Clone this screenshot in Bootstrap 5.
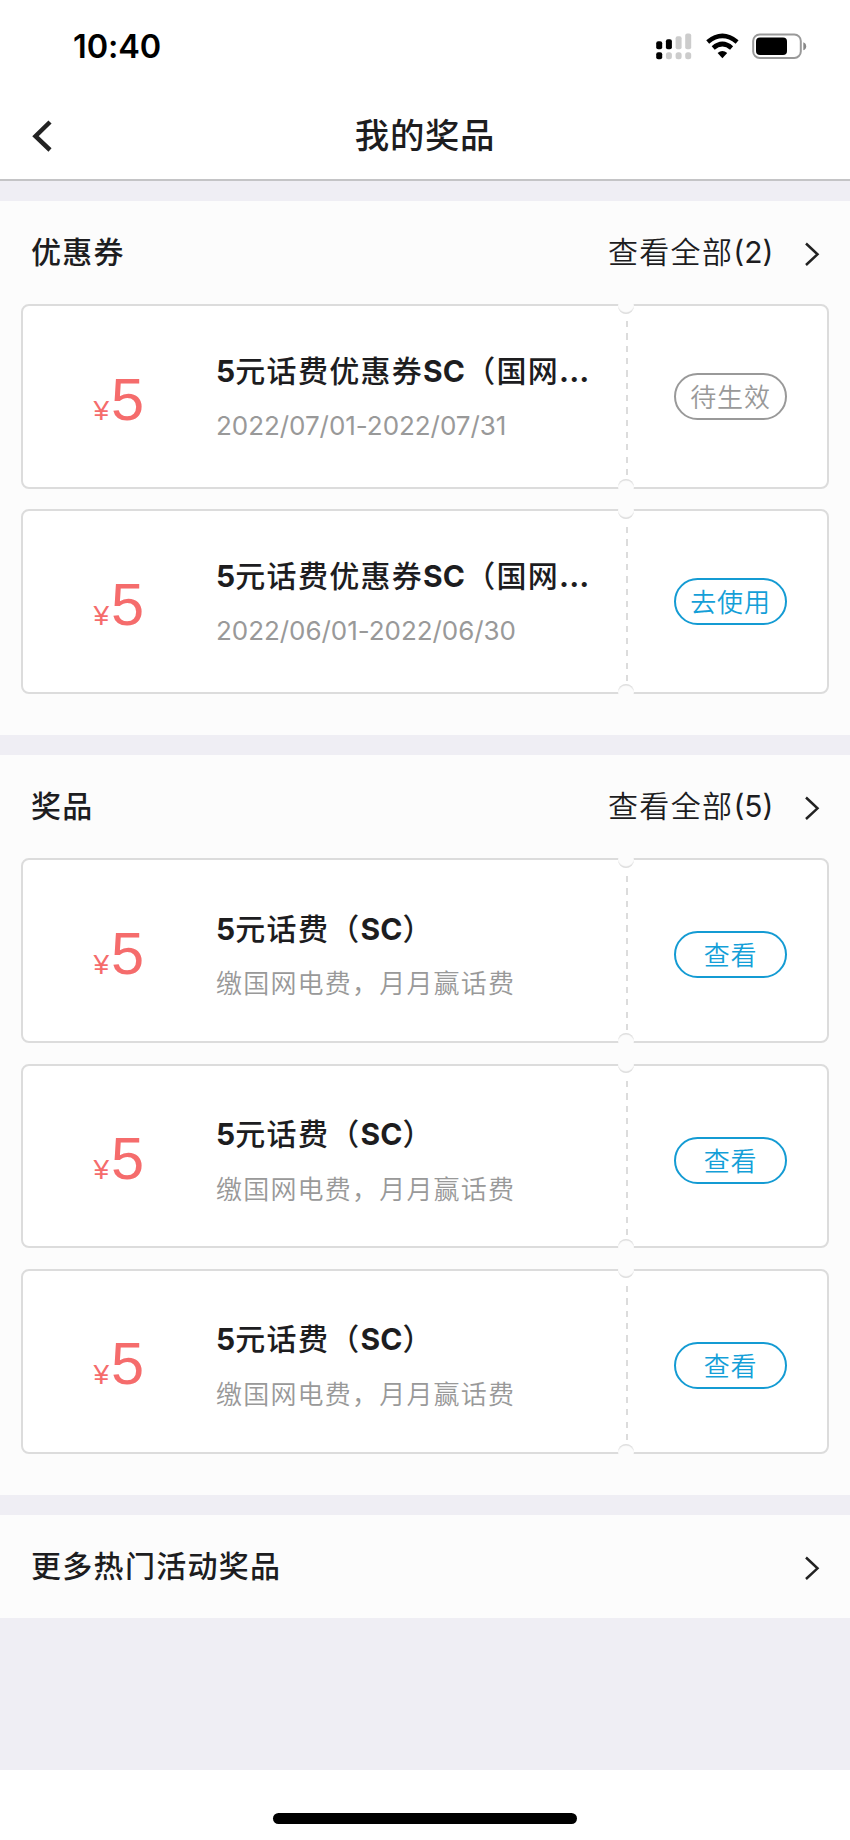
<!DOCTYPE html>
<html lang="zh-CN">
<head>
<meta charset="utf-8">
<meta name="viewport" content="width=device-width, initial-scale=1">
<title>我的奖品</title>
<link href="https://cdn.jsdelivr.net/npm/bootstrap@5.3.0/dist/css/bootstrap.min.css" rel="stylesheet">
<style>
  body { font-family: Inter, "Noto Sans CJK SC", sans-serif; color: #1d1d1f; background: #fff; height: 1840px; overflow: hidden; }
  .status-bar { height: 94px; padding: 0 43px 0 73px; color: #000; }
  .status-time { font-size: 32.5px; font-weight: 600; line-height: 94px; letter-spacing: -.1px; }
  .title-bar { height: 86.5px; border-bottom: 2px solid #c4c4c6; display: grid; grid-template-columns: 90px 1fr 90px; align-items: center; }
  .title-bar h1 { font-size: 34.4px; font-weight: 500; letter-spacing: .7px; line-height: 84px; }
  .page-area { background: #efeef4; padding-top: 20.5px; height: 1589.5px; gap: 20.5px; }
  .panel { background: #fcfcfc; }
  .panel-head { height: 103px; padding: 0 30px 0 31px; }
  .panel-head h2 { font-size: 30px; font-weight: 500; letter-spacing: 1.3px; line-height: 103px; }
  .view-all { font-size: 30px; letter-spacing: 1.35px; font-weight: 350; margin-right: 30.500px; }
  .view-all span { letter-spacing: 0; font-weight: 400; }
  .tickets { padding: 0 21px 41px; gap: 20.7px; }
  .ticket { height: 184.6px; border: 2px solid #dcdcdc; border-radius: 8px; background: #fff; position: relative; }
  .price { width: 193px; color: #f56c6c; padding: 58.5px 0 0 70.5px; line-height: 70px; white-space: nowrap; font-family: "Liberation Sans", sans-serif; }
  .price small { font-size: 28px; }
  .price b { font-size: 59.5px; font-weight: 400; margin-left: 2px; }
  .info { width: 376px; padding-top: 42.5px; }
  .info h3 { font-size: 30px; font-weight: 500; letter-spacing: 1.3px; line-height: 44px; white-space: nowrap; }
  .info h3 i { font-style: normal; font-weight: 650; letter-spacing: .1px; font-size: 30px; }
  .info p { font-size: 26px; line-height: 34px; color: #999; margin-top: 16.5px; font-weight: 400; letter-spacing: -.05px; }
  .info .note { letter-spacing: 1.2px; font-weight: 350; margin-top: 16.5px; }
  .prize .info { padding-top: 46.5px; }
  .tear { width: 34px; }
  .tear::before { content: ""; position: absolute; left: 603px; top: 15.3px; bottom: 11px; width: 2px; background: repeating-linear-gradient(#dcdcdc 0 6.2px, transparent 6.2px 12.33px); }
  .notch { position: absolute; left: 595px; width: 16px; height: 16px; border-radius: 50%; background: #fcfcfc; z-index: 1; }
  .notch-top { top: -8.5px; box-shadow: inset 0 -2px 1px -.5px #ddd; }
  .notch-end { bottom: -8.5px; box-shadow: inset 0 2px 1px -.5px #ddd; }
  .pill { width: 113px; height: 47px; margin: 67px 0 0 48px; padding: 0; border: 2px solid #149bd3; border-radius: 24px; color: #149fd8; font-size: 26px; font-weight: 350; line-height: 45px; letter-spacing: .8px; }
  .pill.waiting { border-color: #999; color: #999; }
  .prize .pill { margin-top: 71px; }
  .home-strip { height: 70px; padding-top: 43px; }
  .home-bar { width: 304px; height: 11px; border-radius: 6px; background: #000; }
</style>
</head>
<body>
<header>
  <div class="status-bar d-flex justify-content-between align-items-center">
    <span class="status-time">10:40</span>
    <svg width="152" height="28" viewBox="0 0 152 28">
      <g>
        <rect x="1.2" y="8.3" width="6" height="8" rx="2"/><rect x="10.9" y="6.3" width="6" height="10" rx="2"/>
        <rect x="1.2" y="19.2" width="6" height="7" rx="2"/>
      </g>
      <g fill="#ccc">
        <rect x="20.6" y="3.3" width="6" height="13" rx="2"/><rect x="30.2" y="0.5" width="6" height="15.8" rx="2"/>
        <rect x="10.9" y="19.2" width="6" height="7" rx="2.5"/><rect x="20.6" y="19.2" width="6" height="7" rx="2.5"/><rect x="30.2" y="19.2" width="6" height="7" rx="2.5"/>
      </g>
      <g fill="none" stroke="#000" stroke-width="4.6">
        <path d="M52.700 9 Q67.400 -3.200 82.100 9"/>
        <path d="M58.200 15 Q67.400 7 76.600 15"/>
      </g>
      <path d="M62.600 20 Q67.400 16 72.200 20 L67.400 25.300Z"/>
      <rect x="98.2" y="1.5" width="47.6" height="23.4" rx="6.5" fill="#fff" stroke="#999" stroke-width="2"/>
      <rect x="101" y="4.4" width="31" height="17.6" rx="4"/>
      <path d="M148.300 9.200 Q151.200 10.200 151.200 13.200 Q151.200 16.200 148.300 17.200Z" fill="#888"/>
    </svg>
  </div>
  <div class="title-bar">
    <svg width="90" height="84" viewBox="0 0 90 84" fill="none" stroke="#222" stroke-width="4.5"><path d="M50 28 L35.500 42.200 L50 56"/></svg>
    <h1 class="text-center mb-0">我的奖品</h1>
  </div>
</header>
<main class="page-area d-flex flex-column">
  <section class="panel">
    <div class="panel-head d-flex align-items-center">
      <h2 class="mb-0 me-auto">优惠券</h2>
      <span class="view-all">查看全部<span>(2)</span></span>
      <svg width="16" height="26" viewBox="0 0 16 26" fill="none" stroke="#222" stroke-width="2.5"><path d="M2 3.500 L13.500 14.300 L2 25"/></svg>
    </div>
    <div class="tickets d-flex flex-column">
      <article class="ticket d-flex align-items-start">
        <div class="price"><small>¥</small><b>5</b></div>
        <div class="info"><h3 class="mb-0"><i>5</i>元话费优惠券<i>SC</i>（国网<i>...</i></h3><p class="mb-0">2022/07/01-2022/07/31</p></div>
        <div class="tear"><span class="notch notch-top"></span><span class="notch notch-end"></span></div>
        <button class="btn pill waiting">待生效</button>
      </article>
      <article class="ticket d-flex align-items-start">
        <div class="price"><small>¥</small><b>5</b></div>
        <div class="info"><h3 class="mb-0"><i>5</i>元话费优惠券<i>SC</i>（国网<i>...</i></h3><p class="mb-0">2022/06/01-2022/06/30</p></div>
        <div class="tear"><span class="notch notch-top"></span><span class="notch notch-end"></span></div>
        <button class="btn pill">去使用</button>
      </article>
    </div>
  </section>
  <section class="panel">
    <div class="panel-head d-flex align-items-center">
      <h2 class="mb-0 me-auto">奖品</h2>
      <span class="view-all">查看全部<span>(5)</span></span>
      <svg width="16" height="26" viewBox="0 0 16 26" fill="none" stroke="#222" stroke-width="2.5"><path d="M2 3.500 L13.500 14.300 L2 25"/></svg>
    </div>
    <div class="tickets d-flex flex-column">
      <article class="ticket prize d-flex align-items-start">
        <div class="price"><small>¥</small><b>5</b></div>
        <div class="info"><h3 class="mb-0"><i>5</i>元话费（<i>SC</i>）</h3><p class="note mb-0">缴国网电费，月月赢话费</p></div>
        <div class="tear"><span class="notch notch-top"></span><span class="notch notch-end"></span></div>
        <button class="btn pill">查看</button>
      </article>
      <article class="ticket prize d-flex align-items-start">
        <div class="price"><small>¥</small><b>5</b></div>
        <div class="info"><h3 class="mb-0"><i>5</i>元话费（<i>SC</i>）</h3><p class="note mb-0">缴国网电费，月月赢话费</p></div>
        <div class="tear"><span class="notch notch-top"></span><span class="notch notch-end"></span></div>
        <button class="btn pill">查看</button>
      </article>
      <article class="ticket prize d-flex align-items-start">
        <div class="price"><small>¥</small><b>5</b></div>
        <div class="info"><h3 class="mb-0"><i>5</i>元话费（<i>SC</i>）</h3><p class="note mb-0">缴国网电费，月月赢话费</p></div>
        <div class="tear"><span class="notch notch-top"></span><span class="notch notch-end"></span></div>
        <button class="btn pill">查看</button>
      </article>
    </div>
  </section>
  <section class="panel">
    <div class="panel-head d-flex align-items-center">
      <h2 class="mb-0 me-auto">更多热门活动奖品</h2>
      <svg width="16" height="26" viewBox="0 0 16 26" fill="none" stroke="#222" stroke-width="2.5"><path d="M2 3.500 L13.500 14.300 L2 25"/></svg>
    </div>
  </section>
</main>
<footer class="home-strip"><div class="home-bar mx-auto"></div></footer>
<script src="https://cdn.jsdelivr.net/npm/bootstrap@5.3.0/dist/js/bootstrap.bundle.min.js"></script>
</body>
</html>
